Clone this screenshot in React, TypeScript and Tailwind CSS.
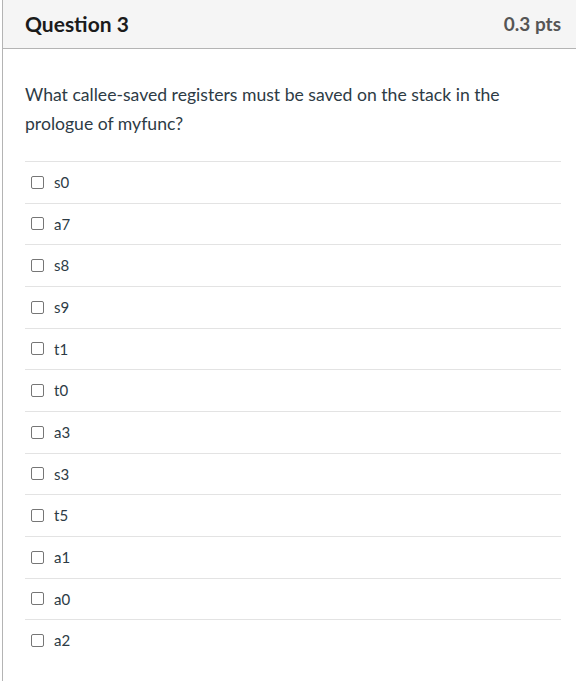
import React from "react";

const options = ["s0", "a7", "s8", "s9", "t1", "t0", "a3", "s3", "t5", "a1", "a0", "a2"];

export default function App() {
  return (
    <div className="ml-[2px] min-h-[681px] border-l border-[#b4b4b4] bg-white font-['Lato',sans-serif] text-[#2d3b45]">
      <div className="flex h-[49px] items-center justify-between border-b border-[#b4b4b4] bg-[#f5f5f5] pl-[22px] pr-[15px]">
        <h2 className="text-[21px] font-bold text-[#1b1b1b]">Question 3</h2>
        <span className="text-[19px] font-bold text-[#555]">0.3 pts</span>
      </div>
      <div className="pl-[22px] pr-[15px]">
        <p className="mt-[31px] text-[17.6px] leading-[29px]">
          What callee-saved registers must be saved on the stack in the prologue of myfunc?
        </p>
        <div className="mt-[23px]">
          {options.map((o) => (
            <label
              key={o}
              className="flex h-[41.67px] items-center gap-[10px] border-t border-[#e3e3e3] pl-[6px] text-[15px]"
            >
              <span className="h-[13px] w-[13px] rounded-[2px] border border-[#767676] bg-white" />
              {o}
            </label>
          ))}
        </div>
      </div>
    </div>
  );
}
